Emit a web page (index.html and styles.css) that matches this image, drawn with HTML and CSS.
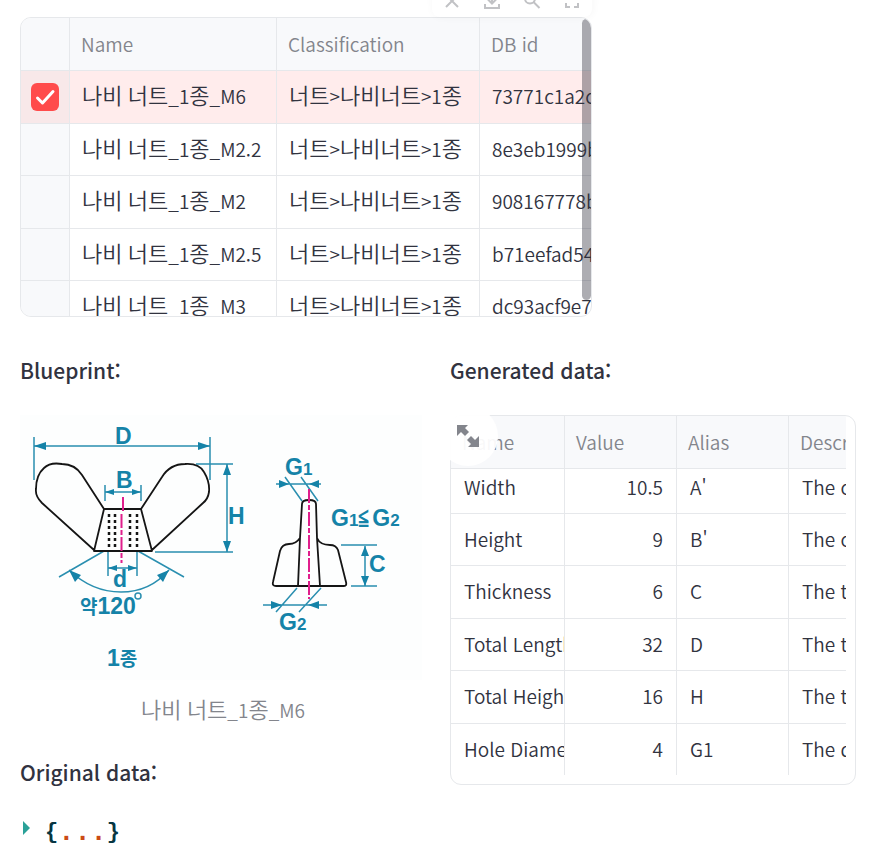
FILE: index.html
```html
<!DOCTYPE html>
<html lang="ko">
<head>
<meta charset="utf-8">
<meta name="viewport" content="width=device-width, initial-scale=1">
<title>나비 너트 Blueprint</title>
<link rel="stylesheet" href="styles.css">
</head>
<body>
<main class="page">
  <section class="parts">
    <div class="frame">
      <table class="grid parts-table">
        <colgroup><col class="c-check"><col class="c-name"><col class="c-class"><col></colgroup>
        <thead><tr><th></th><th>Name</th><th>Classification</th><th>DB id</th></tr></thead>
        <tbody>
          <tr class="selected"><td><label class="check"><input type="checkbox" checked aria-label="나비 너트_1종_M6"><svg viewBox="0 0 28 28" aria-hidden="true"><path d="M6.500 15l5 5L22 8.500"/></svg></label></td><td><b>나비</b> <b>너트</b>_1<b>종</b>_M6</td><td><b>너트</b>&gt;<b>나비너트</b>&gt;1<b>종</b></td><td>73771c1a2c</td></tr>
          <tr><td></td><td><b>나비</b> <b>너트</b>_1<b>종</b>_M2.2</td><td><b>너트</b>&gt;<b>나비너트</b>&gt;1<b>종</b></td><td>8e3eb1999b</td></tr>
          <tr><td></td><td><b>나비</b> <b>너트</b>_1<b>종</b>_M2</td><td><b>너트</b>&gt;<b>나비너트</b>&gt;1<b>종</b></td><td>908167778b</td></tr>
          <tr><td></td><td><b>나비</b> <b>너트</b>_1<b>종</b>_M2.5</td><td><b>너트</b>&gt;<b>나비너트</b>&gt;1<b>종</b></td><td>b71eefad54</td></tr>
          <tr><td></td><td><b>나비</b> <b>너트</b>_1<b>종</b>_M3</td><td><b>너트</b>&gt;<b>나비너트</b>&gt;1<b>종</b></td><td>dc93acf9e7</td></tr>
        </tbody>
      </table>
      <span class="thumb"></span>
    </div>
    <div class="toolbar">
      <button type="button" aria-label="Clear selection"><svg viewBox="0 0 20 20"><path d="M4 4l12 12M16 4L4 16"/></svg></button>
      <button type="button" aria-label="Download"><svg viewBox="0 0 20 20"><path d="M10 2v10M6 8.500l4 4 4-4M3 13v4h14v-4"/></svg></button>
      <button type="button" aria-label="Search"><svg viewBox="0 0 20 20"><circle cx="8" cy="7.500" r="5"/><path d="M11.500 11l6 6"/></svg></button>
      <button type="button" aria-label="Fullscreen"><svg viewBox="0 0 20 20"><path d="M4 8V4h4M12 4h4v4M4 12v4h4M12 16h4v-4"/></svg></button>
    </div>
  </section>

  <div class="columns">
    <section>
      <h2>Blueprint:</h2>
      <figure>
        <svg class="drawing" viewBox="20 415 406 265" role="img" aria-label="Wing nut blueprint">
          <rect class="paper" x="20" y="415" width="402" height="265"/>
          <g class="dim">
            <path d="M34 437v43M210 437v43M34 446h176M105 485v16M141 485v16M105 492h36M196 464h37M155 552h78M227 464v88M108 552v24M137 552v24M108 568h29M104 551L59 577M138 551l46 26M69 570Q92 592 121 592T169 570"/>
            <path d="M276 484h45M285 477l17 24M301 477l17 24M341 545h36M351 586h26M365 546v40M263 605h64M297 588l-21 24M321 588l-22 24"/>
            <circle cx="138" cy="596" r="3"/>
          </g>
          <path class="arrow" d="M34 446l12-4v8zM210 446l-12-4v8zM105 492l9-3v6zM141 492l-9-3v6zM227 464l-4 11h8zM227 552l-4-11h8zM108 568l9-3v6zM137 568l-9-3v6zM69 570l12 5-6 7zM169 570l-12 5 6 7zM289 484l-10-4v8zM309 484l10-4v8zM365 546l-4 10h8zM365 586l-4-10h8zM282 605l-11-4v8zM308 605l11-4v8z"/>
          <g class="shape">
            <path d="M104 509L82 475Q75 464 62 464Q50 462 44 468Q36 475 36 489Q35 496 42 503L94 550M141 509L162 477Q170 464 185 464Q199 463 204 472Q210 482 209 492Q208 499 203 503L152 550M104 509h37l11 42H94z"/>
            <path d="M302 504Q302 500 309 500T316 504L317 538 320 586M302 504L300 538 298 586M300 538Q296 544 289 544Q282 544 280 551L273 582Q272 586 276 586H344Q347 586 346 582L338 550Q336 545 330 545Q320 545 317 538"/>
            <path class="thread" d="M109 514v36M115 514v36M130 514v36M137 514v36"/>
          </g>
          <path class="axis" d="M123 497v14M121.500 514v49M309 489v110"/>
          <g class="tag">
            <text x="115" y="444">D</text><text x="116" y="488">B</text><text x="228" y="524">H</text><text x="113" y="587">d</text>
            <text x="80" y="614" class="kr">약<tspan class="num">120</tspan></text><text x="107" y="666"><tspan>1</tspan><tspan class="kr">종</tspan></text>
            <text x="285" y="475">G<tspan class="sub">1</tspan></text><text x="331" y="526">G<tspan class="sub">1</tspan>≦G<tspan class="sub">2</tspan></text>
            <text x="369" y="572">C</text><text x="279" y="630">G<tspan class="sub">2</tspan></text>
          </g>
        </svg>
        <figcaption><b>나비</b> <b>너트</b>_1<b>종</b>_M6</figcaption>
      </figure>
      <h2>Original data:</h2>
      <button type="button" class="json" aria-label="Expand object"><i class="caret"></i><span>{</span><span class="dots">...</span><span>}</span></button>
    </section>

    <section>
      <h2>Generated data:</h2>
      <div class="generated">
        <div class="frame inset">
          <div class="clip">
            <table class="grid data-table">
              <colgroup><col class="c-wide"><col class="c-mid"><col class="c-mid"><col></colgroup>
              <thead><tr><th>Name</th><th>Value</th><th>Alias</th><th>Description</th></tr></thead>
              <tbody>
                <tr><td>Width</td><td>10.5</td><td>A'</td><td>The core width</td></tr>
                <tr><td>Height</td><td>9</td><td>B'</td><td>The core height</td></tr>
                <tr><td>Thickness</td><td>6</td><td>C</td><td>The thickness</td></tr>
                <tr><td>Total Length</td><td>32</td><td>D</td><td>The total length</td></tr>
                <tr><td>Total Height</td><td>16</td><td>H</td><td>The total height</td></tr>
                <tr><td>Hole Diameter</td><td>4</td><td>G1</td><td>The diameter</td></tr>
              </tbody>
            </table>
          </div>
        </div>
        <button type="button" class="expand" aria-label="View fullscreen"><svg viewBox="0 0 24 24"><path d="M1 1h11L9 4l4 4-4 4-4-4-4 4zM23 23H12l3-3-4-4 4-4 4 4 4-4z"/></svg></button>
      </div>
    </section>
  </div>
</main>
</body>
</html>
```
FILE: styles.css
```css
* { box-sizing: border-box; }

body {
  margin: 0;
  background: #fff;
  color: #31333f;
  font-family: "Noto Sans CJK KR", "Noto Sans", sans-serif;
  font-size: 19px;
  font-weight: 350;
  line-height: 32px;
}

b { font-size: 22px; font-weight: 350; line-height: 1; }
button { border: 0; padding: 0; background: none; font: inherit; }

.page { padding: 17px 13px 12px 20px; overflow: hidden; }

.parts { position: relative; width: 572px; max-width: 100%; }

.frame {
  position: relative;
  height: 300px;
  overflow: hidden;
  border: 1px solid #e6e8eb;
  border-radius: 11px;
}

.grid { width: 100%; table-layout: fixed; border-collapse: separate; border-spacing: 0; }
.grid th, .grid td {
  height: 53px;
  padding: 0 12px 2px;
  overflow: hidden;
  border-right: 1px solid #e6e8eb;
  border-bottom: 1px solid #e6e8eb;
  text-align: left;
  white-space: nowrap;
  font-weight: 350;
}
.grid th { padding: 0 11px; background: #f8f9fb; color: #83858c; }
.grid tbody tr:nth-child(even) td { height: 52px; }
.grid th:last-child, .grid td:last-child { border-right: 0; }

.c-check { width: 49px; }
.c-name { width: 207px; }
.c-class { width: 203px; }
.c-wide { width: 114px; }
.c-mid { width: 112px; }

.parts-table td:first-child { padding: 0 10px; background: #f8f9fb; }
.parts-table .selected td { background: #ffecec; }
.parts-table .selected td:first-child { background: #f8e8e9; }

.check { display: grid; width: 28px; height: 28px; }
.check input, .check svg { grid-area: 1 / 1; width: 28px; height: 28px; margin: 0; }
.check input { appearance: none; border-radius: 6px; background: #ff4b4b; }
.check svg { z-index: 1; pointer-events: none; fill: none; stroke: #fff; stroke-width: 3; stroke-linecap: round; stroke-linejoin: round; }

.thumb {
  position: absolute;
  top: 1px;
  right: 0;
  width: 9px;
  height: 281px;
  border-radius: 5px;
  background: rgba(49, 51, 63, 0.4);
}

.toolbar {
  position: absolute;
  top: -32px;
  right: 0;
  display: flex;
  gap: 20px;
  height: 32px;
  padding: 6px 10px;
  border-radius: 8px;
  background: #fff;
  box-shadow: 1px 0 8px rgba(49, 51, 63, 0.04);
}
.toolbar button { width: 20px; height: 20px; }
.toolbar svg { display: block; fill: none; stroke: #c1c2c5; stroke-width: 2; }

.columns { display: grid; grid-template-columns: 1fr 1fr; gap: 24px; margin-top: 37px; }
h2 { margin: 0 0 29px; font-size: 21px; font-weight: 500; line-height: 32px; }
figure { margin: 0 0 30px; }
.drawing { display: block; width: 100%; }
figcaption { margin-top: 14px; text-align: center; color: #83858c; }

.paper { fill: #fdfefe; }
.dim { fill: none; stroke: #2a8fb0; stroke-width: 1.5; }
.arrow { fill: #1583a8; }
.shape { fill: none; stroke: #151515; stroke-width: 1.8; stroke-linejoin: round; }
.shape .thread { stroke-width: 2.5; stroke-dasharray: 3 3; }
.axis { fill: none; stroke: #e01f8c; stroke-width: 2; stroke-dasharray: 14 2 5 2; }
.tag { fill: #1583a8; font-family: "Liberation Sans", sans-serif; font-size: 23px; font-weight: 700; }
.tag .kr { font-family: "Noto Sans CJK KR", sans-serif; font-size: 19px; }
.tag .num { font-family: "Liberation Sans", sans-serif; font-size: 23px; }
.tag .sub { font-size: 17px; }

.json {
  display: flex;
  align-items: center;
  height: 32px;
  color: #073642;
  font-family: "Liberation Mono", monospace;
  font-size: 22px;
  font-weight: 700;
}
.caret { margin: 0 15px 10px 3px; border: solid transparent; border-width: 7px 0 7px 7px; border-left-color: #2aa198; }
.dots { color: #cb4b16; font-size: 27px; }

.generated { position: relative; }
.inset { height: 370px; padding: 0 9px 9px 0; }
.clip { height: 100%; overflow: hidden; }
.data-table td { padding: 0 13px 2px; text-overflow: clip; }
.data-table tbody tr:first-child td { height: 45px; padding-bottom: 9px; }
.data-table tbody tr:last-child td { border-bottom: 0; }
.data-table td:nth-child(2) { text-align: right; }

.expand {
  position: absolute;
  top: -9px;
  left: -12px;
  display: grid;
  place-items: center;
  width: 60px;
  height: 60px;
  border-radius: 50%;
  background: rgba(255, 255, 255, 0.94);
}
.expand svg { width: 24px; height: 24px; fill: #83858c; }
```
